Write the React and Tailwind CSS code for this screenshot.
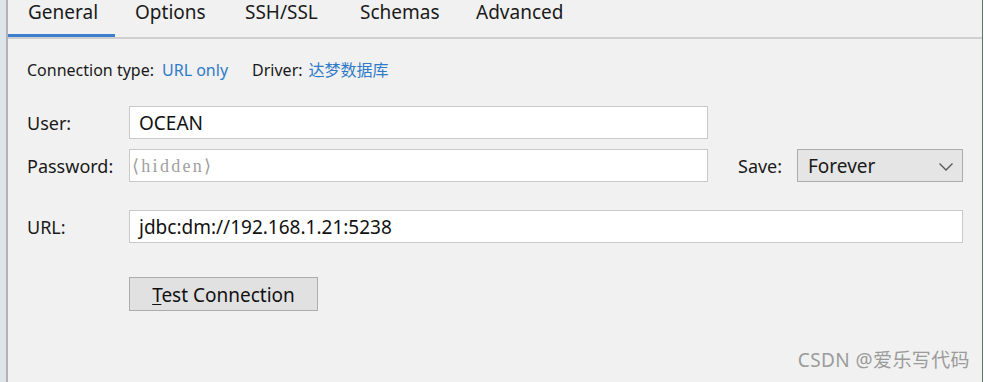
import React from 'react';

const tabs = [
  { label: 'General', width: 'w-[107px]', active: true },
  { label: 'Options', width: 'w-[110px]' },
  { label: 'SSH/SSL', width: 'w-[115px]' },
  { label: 'Schemas', width: 'w-[116px]' },
  { label: 'Advanced', width: 'w-[130px]' },
];

function Field({ value, placeholder }) {
  return (
    <div className="h-[33px] bg-white border border-[#c9c9c9] flex items-center pt-[2px]">
      {value ? (
        <span className="pl-[9px] text-[19px] text-[#111]">{value}</span>
      ) : (
        <span className="pl-[2px] text-[18px] text-[#a0a0a0] font-['Liberation_Serif',serif] tracking-[2.3px]">
          {placeholder}
        </span>
      )}
    </div>
  );
}

export default function App() {
  return (
    <div className="w-[984px] h-[382px] flex bg-[#f1f1f1] font-['Noto_Sans','Noto_Sans_CJK_SC',sans-serif] text-[#1a1a1a] overflow-hidden">
      {/* left sidebar strip */}
      <div className="w-[8px] shrink-0 bg-[#dfe4ea] border-r-2 border-[#b3b3b3]" />

      <div className="flex-1 flex flex-col">
        {/* tab bar */}
        <div className="h-[39px] flex border-b-2 border-[#cfcfcf]">
          {tabs.map((t) => (
            <div
              key={t.label}
              className={`${t.width} pl-5 flex flex-col justify-between ${t.active ? 'border-b-[3px] border-[#3d7fcc]' : ''}`}
            >
              <span className="text-[19px] leading-[26px] mt-[-1px]">{t.label}</span>
            </div>
          ))}
        </div>

        <div className="pl-[19px] pr-[19px] flex flex-col">
          {/* connection info */}
          <div className="mt-[21px] h-[20px] flex items-center text-[16px]">
            <span>Connection type:</span>
            <span className="ml-[8px] text-[#2f7bc8]">URL only</span>
            <span className="ml-[24px]">Driver:</span>
            <span className="ml-[6px] text-[#2f7bc8]">达梦数据库</span>
          </div>

          {/* form */}
          <div className="mt-[26px] grid grid-cols-[102px_579px_30px_59px_166px] items-center text-[18px]">
            <span className="pt-[2px]">User:</span>
            <Field value="OCEAN" />
            <span />
            <span />
            <span />
          </div>
          <div className="mt-[10px] grid grid-cols-[102px_579px_30px_59px_166px] items-center text-[18px]">
            <span className="pt-[2px]">Password:</span>
            <Field placeholder="⟨hidden⟩" />
            <span />
            <span className="pt-[2px]">Save:</span>
            <div className="h-[33px] bg-[#e5e5e5] border border-[#adadad] flex items-center justify-between pl-[10px] pr-[7px] pt-[2px]">
              <span className="text-[19px]">Forever</span>
              <svg width="16" height="10" viewBox="0 0 16 10" className="mr-[1px]">
                <path d="M1.5 1.5 L8 8 L14.5 1.5" fill="none" stroke="#555" strokeWidth="1.3" />
              </svg>
            </div>
          </div>
          <div className="mt-[28px] grid grid-cols-[102px_834px] items-center text-[18px]">
            <span className="pt-[2px]">URL:</span>
            <Field value="jdbc:dm://192.168.1.21:5238" />
          </div>

          <div className="mt-[34px] ml-[102px]">
            <button className="w-[189px] h-[34px] bg-[#e1e1e1] border border-[#adadad] text-[19px] text-[#111] flex items-center justify-center pt-[2px]">
              <span><span className="underline underline-offset-2">T</span>est Connection</span>
            </button>
          </div>

          <div className="mt-[35px] flex justify-end mr-[-7px] text-[19px] tracking-[0.4px] text-[#9b9b9b]">
            CSDN @爱乐写代码
          </div>
        </div>
      </div>

      {/* right edge */}
      <div className="w-[1px] shrink-0 bg-[#5b7a62]" />
      <div className="w-[1px] shrink-0 bg-white" />
    </div>
  );
}
